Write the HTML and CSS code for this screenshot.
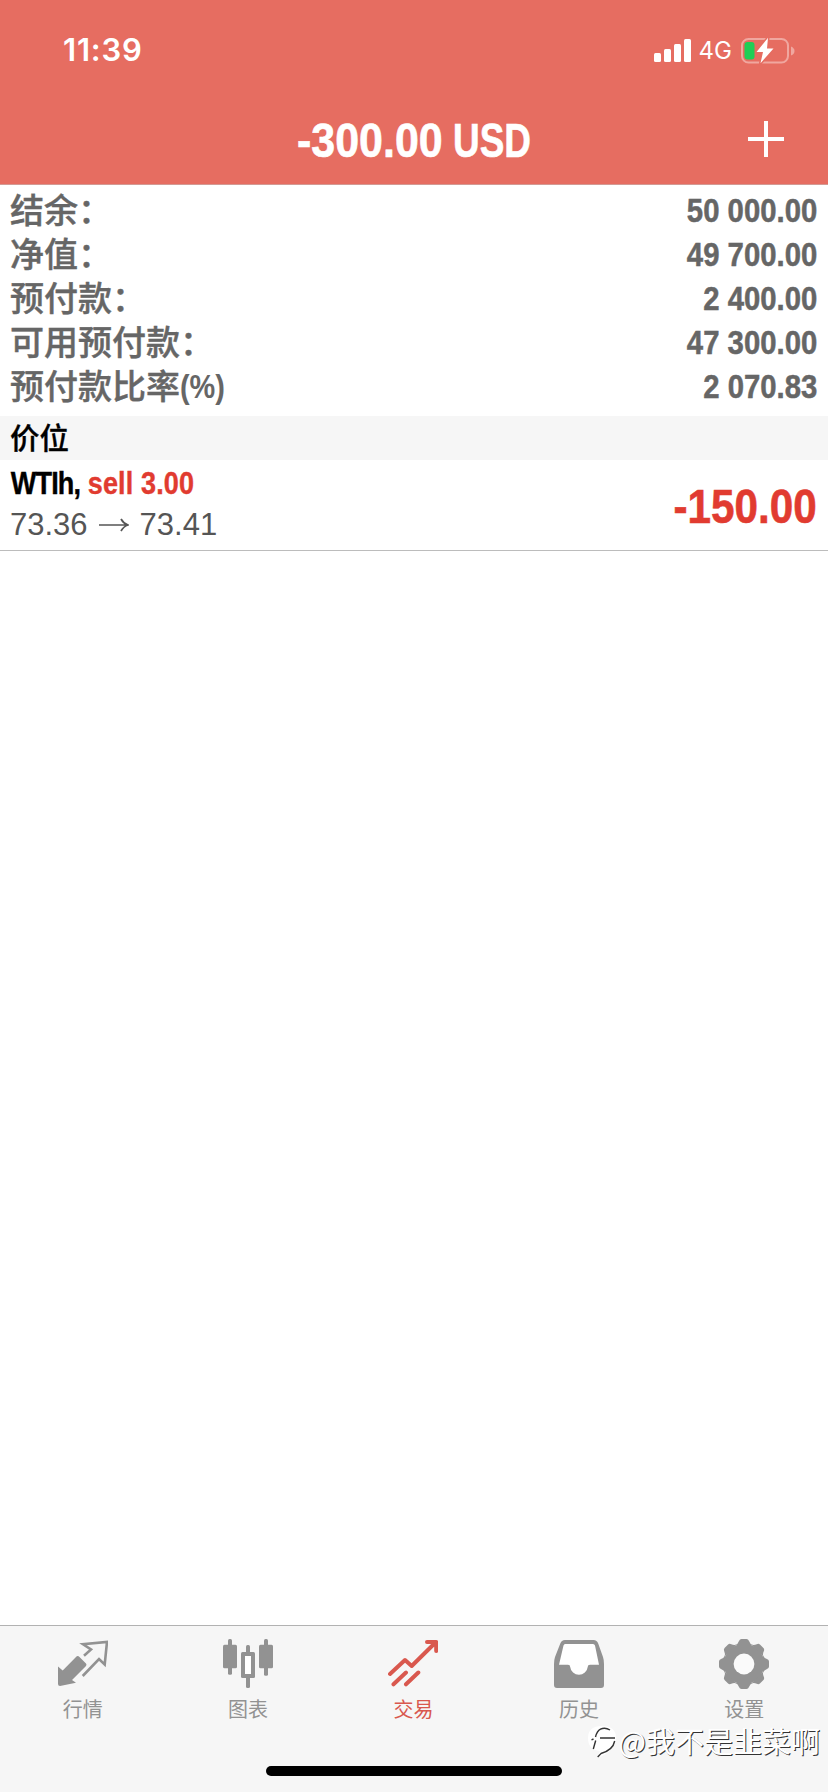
FILE: index.html
```html
<!DOCTYPE html>
<html lang="zh-CN">
<head>
<meta charset="utf-8">
<title>交易</title>
<link rel="stylesheet" href="styles.css">
</head>
<body>
<div class="app">
  <header class="header">
    <div class="status">
      <span class="time">11:39</span>
      <div class="status-right">
        <svg class="signal" width="37" height="23" viewBox="0 0 37 23" fill="#fff"><rect y="14" width="7" height="9" rx="1.5"/><rect x="10" y="10" width="7" height="13" rx="1.5"/><rect x="20" y="5" width="7" height="18" rx="1.5"/><rect x="30" width="7" height="23" rx="1.5"/></svg>
        <span class="network">4G</span>
        <svg class="battery" width="54" height="27" viewBox="0 0 54 27"><rect x="1" y="2" width="46" height="23.500" rx="6.500" fill="none" stroke="#f0a79f" stroke-width="2"/><path d="M50 9.500Q53.500 11 53.500 14T50 18.500Z" fill="#f0a79f"/><rect x="3.500" y="5" width="10" height="17.500" rx="3" fill="#1fce55"/><path d="M27 .8 15.500 15H22L19.500 26.200 32.500 11.500H26Z" fill="#fff" stroke="#e66d61" stroke-width="3" stroke-linejoin="round" paint-order="stroke"/></svg>
      </div>
    </div>
    <div class="navbar">
      <h1 class="title"><span class="amount">-300.00</span><span class="currency">USD</span></h1>
      <svg class="add" width="36" height="36" viewBox="0 0 36 36" stroke="#fff" stroke-width="4"><path d="M18 0V36M0 18H36"/></svg>
    </div>
  </header>
  <main class="content">
    <dl class="summary">
      <div class="row"><dt>结余：</dt><dd>50 000.00</dd></div>
      <div class="row"><dt>净值：</dt><dd>49 700.00</dd></div>
      <div class="row"><dt>预付款：</dt><dd>2 400.00</dd></div>
      <div class="row"><dt>可用预付款：</dt><dd>47 300.00</dd></div>
      <div class="row"><dt>预付款比率<span class="paren">(%)</span></dt><dd>2 070.83</dd></div>
    </dl>
    <h2 class="section">价位</h2>
    <div class="position">
      <div class="position-info">
        <div class="symbol"><span class="name">WTIh,</span> <span class="side">sell 3.00</span></div>
        <div class="prices"><span>73.36</span><svg width="30" height="14" viewBox="0 0 30 14" fill="none" stroke="#555" stroke-width="1.700"><path d="M0 7H29M22 1Q24.500 5.500 29 7Q24.500 8.500 22 13"/></svg><span>73.41</span></div>
      </div>
      <div class="profit">-150.00</div>
    </div>
  </main>
  <nav class="tabbar">
    <div class="tab">
      <svg class="icon" viewBox="0 0 50 50"><path d="M0 27.500 4.700 31.500 18 18Q19.700 16 21.500 18L28 24.500Q29 25.700 28 27L14 41 18 43.700 2 47Q0 47 0 45Z" fill="#929292"/><path d="M26 16.700 33 10.500 25 5.300 49 3 46.700 25.500 41 20 24.700 37" fill="none" stroke="#929292" stroke-width="2.600"/></svg>
      <span>行情</span>
    </div>
    <div class="tab">
      <svg class="icon" viewBox="0 0 50 50" fill="#929292"><rect x="5" width="4" height="35.700" rx="1.500"/><rect y="5.700" width="14" height="23.500" rx="1.500"/><rect x="23" y="6" width="4" height="43" rx="1.500"/><rect x="18" y="13" width="14" height="26" rx="1.500"/><rect x="22" y="17" width="6" height="18" fill="#fff"/><rect x="41" width="4" height="36.700" rx="1.500"/><rect x="36" y="5.700" width="14" height="23.500" rx="1.500"/></svg>
      <span>图表</span>
    </div>
    <div class="tab active">
      <svg class="icon" viewBox="0 0 50 50" fill="none" stroke="#d9584e" stroke-width="4" stroke-linecap="round" stroke-linejoin="round"><path d="M2 35 17 21 23.700 27 48 3M39 3H48.200V12M18 33.500 5.500 45.300M30.300 33.500 18 45.300"/></svg>
      <span>交易</span>
    </div>
    <div class="tab">
      <svg class="icon" viewBox="0 0 50 50"><path d="M11 1H39.500Q43 1 44.200 4.500L49 18Q50 21 50 25V46Q50 49 47 49H3Q0 49 0 46V25Q0 21 1 18L6.300 4.500Q7.500 1 11 1Z" fill="#929292"/><path d="M11 5H39Q40.500 5 41 6.500L45 25.700H36Q33.700 25.700 33.700 28A8.800 8.800 0 0 1 16.200 28Q16.200 25.700 14 25.700H5L9.500 6.500Q10 5 11 5Z" fill="#fff"/></svg>
      <span>历史</span>
    </div>
    <div class="tab">
      <svg class="icon" viewBox="0 0 50 50"><defs><path id="tooth" d="M-8.500-19Q-6-20-5-23Q-4.200-25-2.500-25H2.500Q4.200-25 5-23Q6-20 8.500-19Z"/></defs><g transform="translate(25 25)" fill="#929292"><circle r="20.300"/><use href="#tooth"/><use href="#tooth" transform="rotate(45)"/><use href="#tooth" transform="rotate(90)"/><use href="#tooth" transform="rotate(135)"/><use href="#tooth" transform="rotate(180)"/><use href="#tooth" transform="rotate(225)"/><use href="#tooth" transform="rotate(270)"/><use href="#tooth" transform="rotate(315)"/><circle r="10.400" fill="#fafafa"/></g></svg>
      <span>设置</span>
    </div>
  </nav>
  <div class="home-indicator"></div>
  <div class="watermark">
    <svg width="30" height="34" viewBox="0 0 30 34"><path d="M13 1Q27 1 27 13 27 25 9 33L11 26Q-1 25-1 13-1 1 13 1Z" fill="#fff"/><path d="M4.300 24 6.700 15.500M2.500 14.800 4.500 14M6.500 12Q8 6 11.500 4.200 16 2 21 5M11 13H26M25.700 16Q24 25 12 28.500L8.700 32" fill="none" stroke="#333" stroke-width="1.400"/></svg>
    <span>@我不是韭菜啊</span>
  </div>
</div>
</body>
</html>
```
FILE: styles.css
```css
* { box-sizing: border-box; }
body, h1, h2, dl, dd { margin: 0; }
body {
  background: #fff;
  font-family: "Liberation Sans", "Noto Sans CJK SC", sans-serif;
}
.app {
  position: relative;
  display: flex;
  flex-direction: column;
  width: 828px;
  height: 1792px;
  overflow: hidden;
}
.header {
  height: 185px;
  background: #e66d61;
  border-bottom: 1px solid #d39a94;
  color: #fff;
}
.status {
  display: flex;
  justify-content: space-between;
  align-items: center;
  height: 100px;
  padding: 0 33px 0 63px;
}
.time {
  font: 600 31px/40px Inter, sans-serif;
  letter-spacing: .8px;
}
.status-right { display: flex; align-items: center; }
.network {
  margin: 2px 9px 0 8px;
  font: 400 24px/30px Inter, sans-serif;
}
.navbar {
  display: grid;
  grid-template-columns: 1fr auto 1fr;
  align-items: center;
  height: 84px;
  padding: 0 44px;
}
.title {
  grid-column: 2;
  display: flex;
  font-size: 48px;
  line-height: 82px;
  white-space: nowrap;
  -webkit-text-stroke: .6px #fff;
}
.title { margin-bottom: 2px; }
.amount {
  width: 156px;
  transform: scaleX(.895);
  transform-origin: left;
}
.amount, .currency { display: block; }
.currency {
  width: 79px;
  transform: scaleX(.77);
  transform-origin: left;
}
.add { justify-self: end; margin-bottom: 6px; }
.content { flex: 1; }
.summary { padding: 4px 11px 7px 10px; color: #666; }
.row { display: flex; justify-content: space-between; height: 44px; }
.row dt {
  font: 500 34px/40px "Noto Sans CJK SC", sans-serif;
  -webkit-text-stroke: .4px #666;
}
.row dd {
  font-size: 34px;
  font-weight: 700;
  line-height: 42px;
  -webkit-text-stroke: .5px #666;
  transform: scaleX(.862);
  transform-origin: right;
}
.paren {
  display: inline-block;
  font-family: "Liberation Sans", sans-serif;
  font-size: 34px;
  font-weight: 700;
  line-height: 38px;
  -webkit-text-stroke: 0;
  transform: translateY(-1px) scaleX(.85);
  transform-origin: left;
}
.section {
  height: 44px;
  padding-left: 10px;
  background: #f6f6f6;
  font: 500 29.500px/41px "Noto Sans CJK SC", sans-serif;
  -webkit-text-stroke: .3px #000;
}
.position {
  display: flex;
  justify-content: space-between;
  height: 91px;
  padding: 0 11px 0 10px;
  border-bottom: 1px solid #bcbcbc;
}
.symbol {
  height: 43px;
  padding-left: 1px;
  font-size: 32px;
  font-weight: 700;
  line-height: 46px;
  -webkit-text-stroke: .4px;
  transform: scaleX(.845);
  transform-origin: left;
  white-space: nowrap;
}
.name { letter-spacing: -1px; }
.side { letter-spacing: .15px; }
.side, .profit { color: #e13b30; }
.prices {
  display: flex;
  align-items: center;
  gap: 11px;
  color: #555;
  font-size: 31px;
  line-height: 43px;
}
.profit {
  font-size: 48px;
  font-weight: 700;
  line-height: 93px;
  -webkit-text-stroke: .6px;
  transform: scaleX(.88);
  transform-origin: right;
}
.tabbar {
  display: grid;
  grid-template-columns: repeat(5, 1fr);
  height: 167px;
  padding: 13px 1px 0 0;
  border-top: 1px solid #b2b2b2;
  background: #f6f6f6;
}
.tab {
  display: flex;
  flex-direction: column;
  align-items: center;
  color: #929292;
  font: 400 20px/28px "Noto Sans CJK SC", sans-serif;
}
.tab span { margin-top: 6px; }
.active { color: #d9584e; }
.icon { width: 50px; height: 50px; }
.home-indicator {
  position: absolute;
  left: 266px;
  top: 1766px;
  width: 296px;
  height: 10px;
  border-radius: 5px;
  background: #000;
}
.watermark {
  position: absolute;
  right: 8px;
  bottom: 32px;
  display: flex;
  align-items: center;
  color: #fff;
  font: 400 29px/40px "Noto Sans CJK SC", sans-serif;
  text-shadow: 1px 1px 0 #333;
}
.watermark svg { margin-top: 4px; overflow: visible; }
```
